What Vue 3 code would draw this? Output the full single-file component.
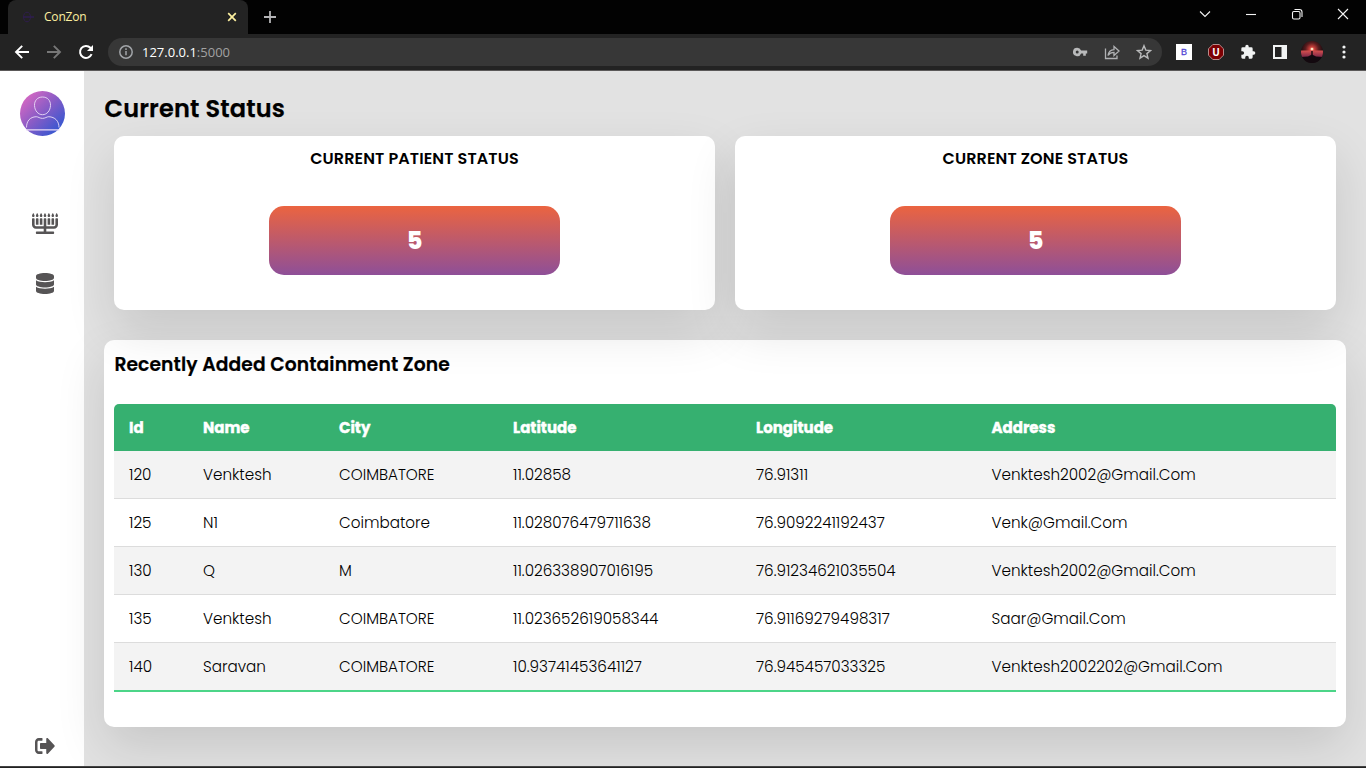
<script setup>
const cards = [
  { title: 'CURRENT PATIENT STATUS', value: '5' },
  { title: 'CURRENT ZONE STATUS', value: '5' },
]

const columns = ['Id', 'Name', 'City', 'Latitude', 'Longitude', 'Address']

const rows = [
  ['120', 'Venktesh', 'COIMBATORE', '11.02858', '76.91311', 'Venktesh2002@Gmail.Com'],
  ['125', 'N1', 'Coimbatore', '11.028076479711638', '76.9092241192437', 'Venk@Gmail.Com'],
  ['130', 'Q', 'M', '11.026338907016195', '76.91234621035504', 'Venktesh2002@Gmail.Com'],
  ['135', 'Venktesh', 'COIMBATORE', '11.023652619058344', '76.91169279498317', 'Saar@Gmail.Com'],
  ['140', 'Saravan', 'COIMBATORE', '10.93741453641127', '76.945457033325', 'Venktesh2002202@Gmail.Com'],
]
</script>

<template>
  <div class="window">
    <header class="tabstrip">
      <div class="tab">
        <svg class="favicon" width="12" height="12" viewBox="0 0 12 12" fill="none" stroke="#2e1d4d">
          <ellipse cx="5" cy="6" rx="3.5" ry="4.8" /><path d="M2 6h10" stroke-width="1.6" />
        </svg>
        <span class="tab-title">ConZon</span>
        <svg width="10" height="10" viewBox="0 0 10 10" stroke="#fdf0a0" stroke-width="1.7"><path d="M1.2 1.2l7.6 7.6M8.8 1.2L1.2 8.8" /></svg>
      </div>
      <svg class="newtab" width="12" height="12" viewBox="0 0 12 12" stroke="#b4b4b6" stroke-width="1.8"><path d="M6 0v12M0 6h12" /></svg>
      <div class="controls">
        <svg width="12" height="12" viewBox="0 0 12 12"><path d="M1 3.5l5 5 5-5" /></svg>
        <svg width="12" height="12" viewBox="0 0 12 12"><path d="M1 6.5h10" /></svg>
        <svg width="12" height="12" viewBox="0 0 12 12"><rect x="1.5" y="3.5" width="7.5" height="7.5" rx="1.4" /><path d="M3.5 1.5h5a2.5 2.5 0 0 1 2.5 2.5v5" /></svg>
        <svg width="12" height="12" viewBox="0 0 12 12"><path d="M1 1l10 10M11 1L1 11" /></svg>
      </div>
    </header>

    <div class="toolbar">
      <svg class="nav-btn" width="16" height="16" viewBox="0 0 16 16" fill="none" stroke="#fff" stroke-width="1.9"><path d="M15 8H2.2M8.2 1.8L2 8l6.2 6.2" /></svg>
      <svg class="nav-btn" width="16" height="16" viewBox="0 0 16 16" fill="none" stroke="#777" stroke-width="1.9"><path d="M1 8h12.8M7.8 1.8L14 8l-6.2 6.2" /></svg>
      <svg class="nav-btn" width="16" height="16" viewBox="0 0 16 16" fill="none" stroke="#fff" stroke-width="2"><path d="M13.6 10.2A6 6 0 1 1 12.4 3.8L14 5.4" /><path d="M15 1v6H9z" fill="#fff" stroke="none" /></svg>
      <div class="omnibox">
        <svg width="14" height="14" viewBox="0 0 14 14" fill="none" stroke="#a2a5a9" stroke-width="1.5"><circle cx="7" cy="7" r="6.2" /><path d="M7 6v4.3M7 3.3v1.6" /></svg>
        <span class="url"><b>127.0.0.1</b>:5000</span>
        <svg class="key" width="15" height="10" viewBox="0 0 15 10" fill="#b9babb"><path fill-rule="evenodd" d="M4.2.8a4.2 4.2 0 1 0 3.9 5.6h2.1v2.4h2.6V6.4h1.4V3.6H8.1A4.2 4.2 0 0 0 4.2.8zm0 2.7a1.500 1.500 0 1 1 0 3 1.500 1.500 0 0 1 0-3z" /></svg>
        <svg class="share" width="16" height="16" viewBox="0 0 16 16" fill="none" stroke="#b0b1b3" stroke-width="1.3"><path d="M1.500 4.500v10h11.500v-3" /><path d="M4 11.500c.6-4 3-5.600 6-5.800V2.500l5 4.500-5 4.500V8.400c-2.600 0-4.500.8-6 3.100z" /></svg>
        <svg width="16" height="16" viewBox="0 0 16 16" fill="none" stroke="#b9babb" stroke-width="1.4"><path d="M8 1.700l1.800 4.400 4.700.4-3.600 3.100 1.100 4.600L8 11.700l-4 2.500 1.100-4.600L1.500 6.500l4.700-.4z" /></svg>
      </div>
      <div class="extensions">
        <span class="ext-b">B</span>
        <span class="ext-u">
          <svg width="16" height="16" viewBox="0 0 16 16"><path d="M4.800.5h6.400l4.300 4.300v6.400l-4.300 4.300H4.800L.5 11.200V4.800z" fill="#7d0003" stroke="#b78b8b" /></svg>
          <b>U</b>
        </span>
        <svg width="16" height="16" viewBox="0 0 24 24" fill="#f1f3f3"><path d="M20.500 11H19V7a2 2 0 0 0-2-2h-4V3.500a2.500 2.500 0 0 0-5 0V5H4a2 2 0 0 0-2 2v3.800h1.500a2.700 2.700 0 0 1 0 5.400H2V20a2 2 0 0 0 2 2h3.800v-1.500a2.700 2.700 0 0 1 5.400 0V22H17a2 2 0 0 0 2-2v-4h1.500a2.500 2.500 0 0 0 0-5z" /></svg>
        <svg width="16" height="16" viewBox="0 0 16 16"><path fill="#f1f3f3" fill-rule="evenodd" d="M1 1h14v14H1zM3 3v10h6.500V3z" /></svg>
        <svg class="profile" width="22" height="22" viewBox="0 0 22 22">
          <defs>
            <radialGradient id="sun" cx="50%" cy="38%" r="50%"><stop offset="0" stop-color="#ff9a7a" /><stop offset=".25" stop-color="#c23c38" /><stop offset=".6" stop-color="#5a1c1e" /><stop offset="1" stop-color="#1c0c10" /></radialGradient>
            <linearGradient id="sea" x1="0" y1="0" x2="0" y2="1"><stop offset="0" stop-color="#d8504e" /><stop offset="1" stop-color="#7c2748" /></linearGradient>
            <clipPath id="round"><circle cx="11" cy="11" r="11" /></clipPath>
          </defs>
          <g clip-path="url(#round)">
            <path fill="url(#sun)" d="M0 0h22v22H0z" /><path fill="url(#sea)" d="M0 9.500h22v6.500H0z" />
            <path fill="#13090f" d="M0 16l7-.5 4-2 4 2 7 .5v6H0z" /><path fill="#13090f" d="M10.300 10h1.400v4h-1.400z" /><circle cx="11" cy="8" r="1.300" fill="#ffe0c0" />
          </g>
        </svg>
        <svg width="4" height="14" viewBox="0 0 4 14" fill="#f1f3f3"><circle cx="2" cy="2" r="1.600" /><circle cx="2" cy="7" r="1.600" /><circle cx="2" cy="12" r="1.600" /></svg>
      </div>
    </div>

    <div class="page">
      <nav class="sidebar">
        <svg class="avatar" width="45" height="45" viewBox="0 0 45 45">
          <defs><linearGradient id="av" x1=".1" y1=".1" x2=".85" y2=".85"><stop offset="0" stop-color="#d868c2" /><stop offset=".5" stop-color="#8a5cc6" /><stop offset="1" stop-color="#3a57d0" /></linearGradient></defs>
          <circle cx="22.500" cy="22.500" r="22.500" fill="url(#av)" />
          <g fill="none" stroke="#eadcf7" stroke-width=".9">
            <path d="M22.500 6c5 0 8.200 3.600 8 8.500-.2 5.200-3.600 9.200-8 9.200s-7.800-4-8-9.200c-.2-4.900 3-8.500 8-8.500z" />
            <path d="M6.500 36.500c0-6.500 3.500-10.500 9.700-10.800 2 0 3.700 1.700 6.300 1.700s4.300-1.700 6.300-1.700c6.200.3 10.200 4.300 10.200 10.800" />
            <path d="M6 38.800h33.500" stroke-width="1.200" />
          </g>
        </svg>
        <svg class="menorah" width="26" height="21" viewBox="0 0 640 512" preserveAspectRatio="none" fill="#565455"><path d="M144 128h-32c-8.800 0-16 7.200-16 16v144h64V144c0-8.800-7.200-16-16-16zm96 0h-32c-8.800 0-16 7.200-16 16v144h64V144c0-8.800-7.200-16-16-16zm192 0h-32c-8.800 0-16 7.200-16 16v144h64V144c0-8.800-7.200-16-16-16zm96 0h-32c-8.800 0-16 7.200-16 16v144h64V144c0-8.800-7.200-16-16-16zm80-32c17.700 0 32-14.300 32-32S608 0 608 0s-32 46.300-32 64 14.300 32 32 32zm-96 0c17.700 0 32-14.300 32-32S512 0 512 0s-32 46.300-32 64 14.300 32 32 32zm-96 0c17.700 0 32-14.300 32-32S416 0 416 0s-32 46.300-32 64 14.300 32 32 32zm-96 0c17.700 0 32-14.300 32-32S320 0 320 0s-32 46.300-32 64 14.300 32 32 32zm-96 0c17.700 0 32-14.300 32-32S224 0 224 0s-32 46.300-32 64 14.300 32 32 32zm-96 0c17.700 0 32-14.300 32-32S128 0 128 0 96 46.300 96 64s14.300 32 32 32zm-96 0c17.700 0 32-14.300 32-32S32 0 32 0 0 46.300 0 64s14.300 32 32 32zm544 48v144c0 17.700-14.300 32-32 32H352V144c0-8.800-7.200-16-16-16h-32c-8.800 0-16 7.200-16 16v176H96c-17.700 0-32-14.300-32-32V144c0-8.800-7.200-16-16-16H16c-8.800 0-16 7.200-16 16v144c0 53 43 96 96 96h192v64H112c-8.800 0-16 7.200-16 16v32c0 8.800 7.200 16 16 16h416c8.800 0 16-7.200 16-16v-32c0-8.800-7.200-16-16-16H352v-64h192c53 0 96-43 96-96V144c0-8.800-7.200-16-16-16h-32c-8.800 0-16 7.200-16 16z" /></svg>
        <svg class="database" width="18" height="21" viewBox="0 0 448 512" preserveAspectRatio="none" fill="#565455"><path d="M448 73.100v45.800C448 159.100 347.700 192 224 192S0 159.100 0 118.900V73.100C0 32.900 100.300 0 224 0s224 32.900 224 73.100zM448 176v102.900C448 319.100 347.700 352 224 352S0 319.100 0 278.900V176c48.100 33.100 136.200 48.600 224 48.600S399.900 209.100 448 176zm0 160v102.900C448 479.100 347.700 512 224 512S0 479.100 0 438.900V336c48.100 33.100 136.200 48.600 224 48.600S399.900 369.100 448 336z" /></svg>
        <svg class="signout" width="20" height="16" viewBox="0 64 512 384" preserveAspectRatio="none" fill="#565455"><path d="M497 273L329 441c-15 15-41 4.500-41-17v-96H152c-13.300 0-24-10.700-24-24v-96c0-13.300 10.700-24 24-24h136V88c0-21.400 25.900-32 41-17l168 168c9.300 9.400 9.300 24.600 0 34zM192 436v-40c0-6.600-5.400-12-12-12H96c-17.700 0-32-14.300-32-32V160c0-17.700 14.300-32 32-32h84c6.600 0 12-5.400 12-12V76c0-6.600-5.400-12-12-12H96c-53 0-96 43-96 96v192c0 53 43 96 96 96h84c6.600 0 12-5.400 12-12z" /></svg>
      </nav>

      <main class="content">
        <h1>Current Status</h1>
        <section class="cards">
          <article v-for="card in cards" :key="card.title" class="card">
            <h3>{{ card.title }}</h3>
            <div class="pill">{{ card.value }}</div>
          </article>
        </section>
        <section class="panel">
          <h2>Recently Added Containment Zone</h2>
          <div class="table">
            <div class="row head">
              <div v-for="col in columns" :key="col">{{ col }}</div>
            </div>
            <div v-for="row in rows" :key="row[0]" class="row">
              <div v-for="(cell, i) in row" :key="i">{{ cell }}</div>
            </div>
          </div>
        </section>
      </main>
    </div>
    <footer class="taskbar"></footer>
  </div>
</template>

<style>
html, body { margin: 0; overflow: hidden; }
</style>

<style scoped>
* { box-sizing: border-box; margin: 0; }
svg { display: block; flex: none; }
.window { width: 1366px; height: 768px; display: flex; flex-direction: column; overflow: hidden; font-family: Poppins, Inter, "Open Sans", sans-serif; color: #000; white-space: nowrap; }

.tabstrip { height: 34px; flex: none; background: #020202; display: flex; align-items: center; padding-left: 8px; font-family: "Open Sans", sans-serif; }
.tab { width: 240px; height: 34px; background: #232323; border-radius: 8px 8px 0 0; display: flex; align-items: center; padding: 0 11px 0 14px; }
.tab-title { flex: 1; margin-left: 10px; font-size: 12px; line-height: 16px; letter-spacing: -.2px; color: #fdf0a0; }
.newtab { margin-left: 16px; }
.controls { margin-left: auto; display: flex; gap: 34px; padding: 0 17px 6px 0; }
.controls svg { fill: none; stroke: #f4f4f4; stroke-width: 1.1; }

.toolbar { height: 37px; flex: none; background: #232323; border-bottom: 1px solid #5b5959; display: flex; align-items: center; padding-left: 14px; font-family: "Open Sans", sans-serif; }
.nav-btn { margin-right: 16px; }
.omnibox { width: 1054px; height: 28px; margin-left: -2px; border-radius: 14px; background: #373737; display: flex; align-items: center; padding: 0 10px 0 11px; }
.url { flex: 1; margin-left: 9px; font-size: 13px; line-height: 18px; color: #a2a2a2; }
.url b { font-weight: 400; color: #fff; }
.key { margin-right: 16px; }
.share { margin-right: 16px; }
.extensions { display: flex; align-items: center; margin-left: 14px; }
.ext-b { width: 16px; height: 16px; background: #fff; color: #5246d4; font: 400 9px/16px "Liberation Sans", sans-serif; -webkit-text-stroke: .3px; text-align: center; margin-right: 16px; }
.ext-u { position: relative; margin-right: 16px; }
.ext-u b { position: absolute; inset: 0; text-align: center; color: #fff; font: 700 10px/16px "Noto Sans", sans-serif; }
.extensions > svg { margin-right: 16px; }
.extensions > .profile { margin: 0 19px 0 -3px; }

.page { height: 695px; flex: none; display: flex; background: #e2e2e2; overflow: hidden; }
.sidebar { width: 84px; flex: none; background: #fff; display: flex; flex-direction: column; align-items: center; padding: 20px 0 12px; }
.avatar { margin-left: 1px; }
.menorah { margin: 77px 0 0 6px; }
.database { margin: 39px 0 0 6px; }
.signout { margin: auto 0 0 6px; }

.content { flex: 1; padding: 20px; }
h1 { padding-left: .5px; font-size: 24px; font-weight: 600; line-height: 36px; letter-spacing: .2px; -webkit-text-stroke: .25px; }
.cards { display: flex; gap: 20px; padding: 9px 10px 0; }
.card { position: relative; z-index: 1; flex: 1; height: 174px; border-radius: 10px; background: #fff; box-shadow: 0 20px 50px rgba(0, 0, 0, .12); display: flex; flex-direction: column; align-items: center; padding-top: 11px; }
h3 { font-size: 16px; font-weight: 600; line-height: 24px; letter-spacing: .12px; }
.pill { margin-top: 35px; width: 290.300px; height: 69px; border-radius: 15px; background: linear-gradient(#eb6440, #8e4f98); color: #fff; font-size: 24px; font-weight: 800; line-height: 69px; text-align: center; }
.panel { margin-top: 30px; height: 387px; border-radius: 10px; background: #fff; box-shadow: 0 20px 50px rgba(0, 0, 0, .12); padding: 10px; }
h2 { padding: 1px 0 0 .4px; font-size: 18.720px; font-weight: 600; line-height: 28px; letter-spacing: .1px; -webkit-text-stroke: .2px; }
.table { margin-top: 25px; border-radius: 5px 5px 0 0; overflow: hidden; border-bottom: 2px solid #4cd588; }
.row { display: grid; grid-template-columns: 74px 136px 174px 243px 235.500px 1fr; height: 48px; align-items: center; border-bottom: 1px solid #dcdcdc; font-size: 15.200px; font-weight: 300; line-height: 22px; }
.row > div { padding-left: 15px; }
.row:nth-child(even) { background: #f3f3f3; }
.row:last-child { height: 47px; border-bottom: 0; }
.row.head { height: 47px; border: 0; background: #36b070; color: #fff; font-size: 15px; font-weight: 700; -webkit-text-stroke: .4px; }

.taskbar { height: 2px; flex: none; background: #222; border-top: 1px solid #444; }
</style>
